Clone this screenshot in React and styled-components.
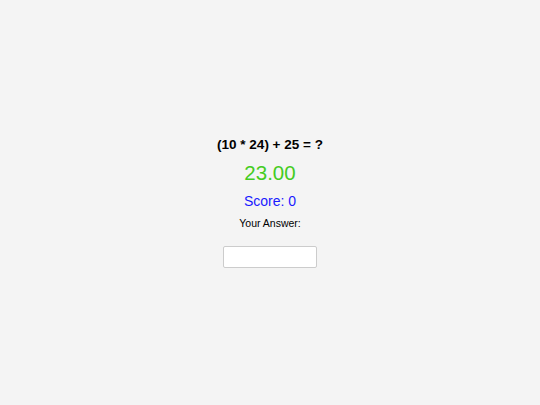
import React from "react";
import styled, { createGlobalStyle } from "styled-components";

const Global = createGlobalStyle`
  html, body { margin: 0; padding: 0; background: #f4f4f4; }
  body { font-family: "Liberation Sans", Arial, sans-serif; }
`;

const Page = styled.div`
  height: 405px;
  display: flex;
  flex-direction: column;
  align-items: center;
  justify-content: center;
  color: #000;
`;

const Question = styled.div`
  font-size: 13.5px;
  font-weight: bold;
  line-height: 16px;
`;

const Result = styled.div`
  font-size: 20.5px;
  color: #44cc22;
  margin-top: 8px;
  line-height: 24px;
`;

const Score = styled.div`
  font-size: 14px;
  color: #1a1aff;
  margin-top: 8px;
  line-height: 16px;
`;

const Label = styled.div`
  font-size: 10.5px;
  margin-top: 7.5px;
  line-height: 13px;
`;

const Input = styled.input`
  margin-top: 16.5px;
  width: 94px;
  height: 22px;
  box-sizing: border-box;
  border: 1px solid #ccc;
  border-radius: 2px;
  background: #fff;
  outline: none;
`;

export default function App() {
  return (
    <>
      <Global />
      <Page>
        <Question>(10 * 24) + 25 = ?</Question>
        <Result>23.00</Result>
        <Score>Score: 0</Score>
        <Label>Your Answer:</Label>
        <Input type="text" />
      </Page>
    </>
  );
}
